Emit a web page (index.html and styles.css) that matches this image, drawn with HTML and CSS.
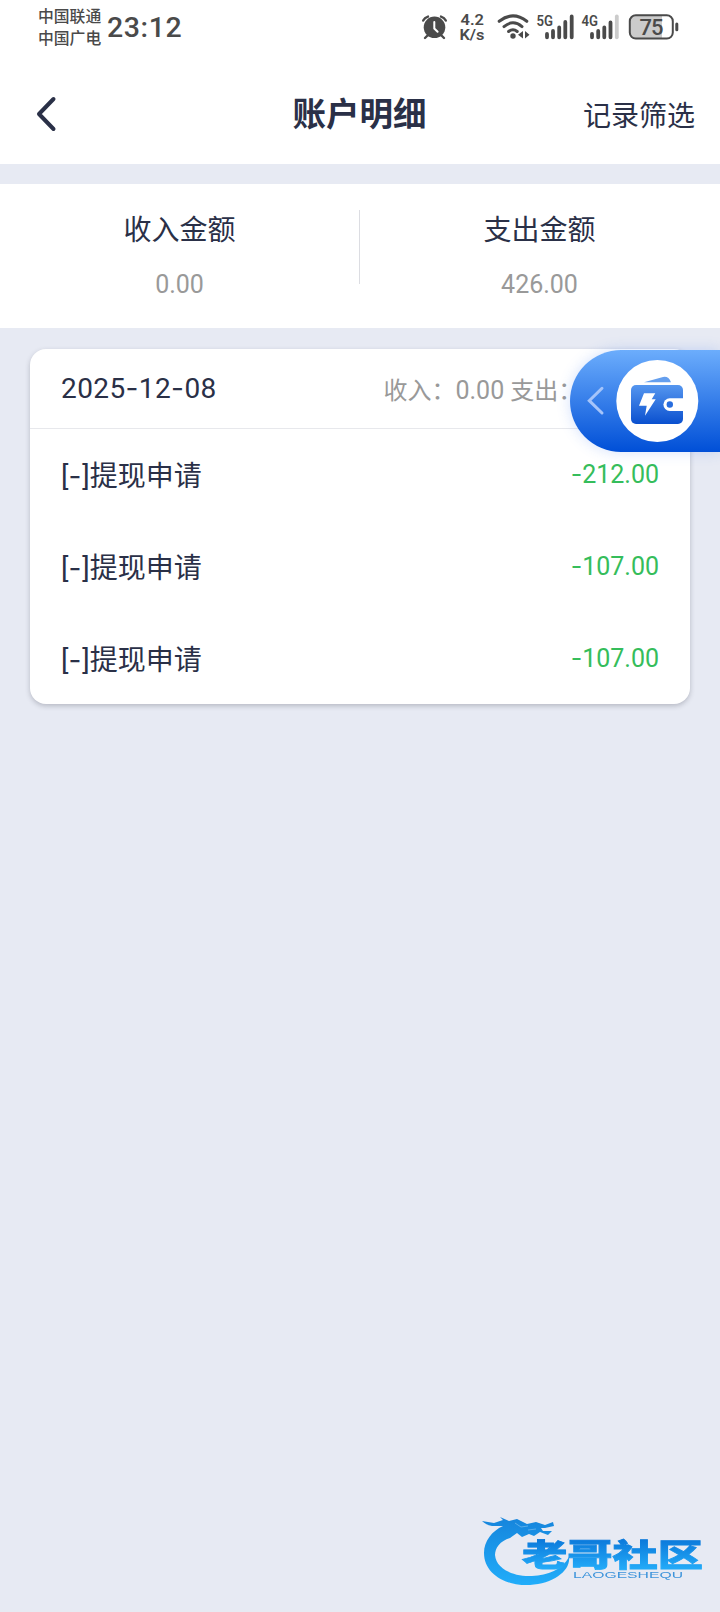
FILE: index.html
```html
<!DOCTYPE html>
<html lang="zh-CN">
<head>
<meta charset="utf-8">
<title>账户明细</title>
<link rel="stylesheet" href="styles.css">
</head>
<body>
<header class="status-bar">
  <div class="carriers"><span>中国联通</span><span>中国广电</span></div>
  <div class="clock">23:12</div>
  <svg class="status-icons" width="270" height="56" viewBox="415 0 270 56">
    <g fill="#4a4a4a" stroke="#4a4a4a" stroke-linecap="round">
      <circle cx="434.5" cy="27.3" r="10.8" stroke="none"/>
      <path d="M423.2 20.600Q424.600 17.600 428 16.600M445.800 20.600Q444.400 17.600 441 16.600M427.500 35.500L425 38M441.500 35.500L444 38" fill="none" stroke-width="2.4"/>
      <path d="M434.3 22V28.500L437.600 31.800" fill="none" stroke="#fff" stroke-width="2"/>
      <path d="M499.200 21.300Q513 10.500 526.800 21.300M504 26.600Q513 19 522 26.600M508.600 31.500Q513 28 517.200 31.500" fill="none" stroke-width="3"/>
      <circle cx="513" cy="36" r="2.7" stroke="none"/>
      <path d="M523 31V38.500L518 34.800ZM525 31V38.500L529.500 34.800Z" stroke="none"/>
    </g>
    <g class="status-text">
      <text x="460.5" y="25" font-size="14" textLength="23.5" lengthAdjust="spacingAndGlyphs">4.2</text>
      <text x="459.5" y="39.500" font-size="15.500" textLength="25" lengthAdjust="spacingAndGlyphs">K/s</text>
      <text x="536.500" y="25.500" font-size="15.500" textLength="16.500" lengthAdjust="spacingAndGlyphs">5G</text>
      <text x="581.500" y="26" font-size="15.500" textLength="16.500" lengthAdjust="spacingAndGlyphs">4G</text>
    </g>
    <g fill="none" stroke="#4a4a4a" stroke-width="3.8" stroke-linecap="round">
      <path d="M547 34V37.300M553 31V37.300M559.200 27.500V37.300M565.300 22V37.300M571.700 16.500V37.300"/>
      <path d="M592 34V37.300M598.200 31V37.300M604.300 27.500V37.300M610.500 22.500V37.300"/>
      <path d="M616.800 16.500V37.300" stroke="#cbcbcb"/>
    </g>
    <path d="M635 15.500H662V38.500H635Q630 38.500 630 33V21Q630 15.500 635 15.500Z" fill="#cbcbcb"/>
    <rect x="629.800" y="15.300" width="43" height="23.300" rx="6" fill="none" stroke="#4a4a4a" stroke-width="2"/>
    <rect x="675.300" y="22.500" width="3" height="8.800" rx="1.500" fill="#4a4a4a"/>
    <text class="status-text battery" x="639.500" y="34.500" font-size="22" textLength="24">75</text>
  </svg>
</header>

<nav class="nav">
  <svg class="back" width="24" height="36" viewBox="0 0 24 36"><path d="M19.500 3L5 18L19.500 33" fill="none" stroke="#2a3047" stroke-width="4" stroke-linecap="round" stroke-linejoin="round"/></svg>
  <h1 class="title">账户明细</h1>
  <span class="filter">记录筛选</span>
</nav>

<section class="summary">
  <div class="total"><span class="total-label">收入金额</span><span class="total-value">0.00</span></div>
  <div class="rule"></div>
  <div class="total"><span class="total-label">支出金额</span><span class="total-value">426.00</span></div>
</section>

<main class="card">
  <div class="day">
    <span class="date">2025<span class="dash">-</span>12<span class="dash">-</span>08</span>
    <span class="day-totals">收入：<span class="num">0.00</span> 支出：<span class="num">426.00</span></span>
  </div>
  <div class="row"><span>[<span class="dash wide">-</span>]提现申请</span><span class="amount"><span class="dash">-</span>212.00</span></div>
  <div class="row"><span>[<span class="dash wide">-</span>]提现申请</span><span class="amount"><span class="dash">-</span>107.00</span></div>
  <div class="row"><span>[<span class="dash wide">-</span>]提现申请</span><span class="amount"><span class="dash">-</span>107.00</span></div>
</main>

<div class="wallet-tab">
  <svg width="150" height="102" viewBox="0 0 150 102">
    <defs>
      <linearGradient id="wallet" x1="0" y1="35" x2="0" y2="74" gradientUnits="userSpaceOnUse"><stop offset="0" stop-color="#5596ef"/><stop offset="1" stop-color="#0a50cf"/></linearGradient>
    </defs>
    <path d="M32 38.300L19.300 50.700L32 63" fill="none" stroke="#a5c4fa" stroke-width="3" stroke-linecap="round"/>
    <circle cx="87.300" cy="51" r="41" fill="#fff"/>
    <path d="M74 32.200L93 27Q98.500 25.800 101 32.200Z" fill="#659fee"/>
    <rect x="61" y="35" width="52" height="39" rx="5" fill="url(#wallet)"/>
    <path d="M74 43.300H85.300L81.700 49.300H85.700L75 65.700L76.700 55.700H69Z" fill="#fff"/>
    <path d="M114 48.300H99.700A6.300 6.300 0 0 0 99.700 60.900H114Z" fill="#fff"/>
    <circle cx="99.800" cy="54.500" r="3.200" fill="#286dde"/>
  </svg>
</div>

<div class="logo">
  <svg width="250" height="112" viewBox="0 0 250 112">
    <defs>
      <linearGradient id="ring" x1="0" y1="18" x2="0" y2="85" gradientUnits="userSpaceOnUse"><stop offset="0" stop-color="#1685dc"/><stop offset="1" stop-color="#21adfa"/></linearGradient>
      <linearGradient id="word" x1="0" y1="39" x2="0" y2="68" gradientUnits="userSpaceOnUse"><stop offset="0" stop-color="#0b78da"/><stop offset="1" stop-color="#22a9f7"/></linearGradient>
    </defs>
    <path d="M12 21L24 23L33 20L30 17L39 21L47 19L57 24L66 22L75 25L83 22L84 26L75 28L71 28L73 31L82 31L78 35L70 32L64 36L59 34L52 37L47 33L40 38C30 41 25 48 25 55C26 69 44 77 62 76C78 75 92 70 99 57C101 70 84 84 60 85C34 86 14 73 14 53C14 41 22 31 33 26L22 26Q16 25 12 21Z" fill="url(#ring)"/>
    <path d="M45 23L51 27L58 26M58 30L66 29" fill="none" stroke="#58adea" stroke-width="1"/>
    <text class="logo-word" x="52" y="65.500" textLength="181" lengthAdjust="spacingAndGlyphs" fill="url(#word)" stroke="url(#word)">老哥社区</text>
    <text class="logo-latin" x="103" y="78.300" textLength="110" lengthAdjust="spacingAndGlyphs">LAOGESHEQU</text>
  </svg>
</div>
</body>
</html>
```

FILE: styles.css
```css
* { box-sizing: border-box; }

body {
  margin: 0;
  min-height: 1612px;
  background: #e7eaf3;
  color: #2a3047;
  font-family: Roboto, "Noto Sans CJK SC", sans-serif;
  font-size: 28px;
}

.status-bar {
  display: flex;
  height: 56px;
  padding-left: 38px;
  background: #fff;
  color: #4a4a4a;
}

.carriers {
  display: flex;
  flex-direction: column;
  width: 69px;
  padding-top: 6px;
  font-size: 15.8px;
  line-height: 22px;
  font-weight: 500;
  white-space: nowrap;
}

.clock {
  width: 308px;
  font-size: 28.5px;
  font-weight: 500;
  line-height: 56px;
  letter-spacing: 0.6px;
}

.status-text {
  font-family: Roboto, sans-serif;
  font-weight: 600;
  fill: #4a4a4a;
}

.battery { font-weight: 500; }

.nav {
  display: grid;
  grid-template-columns: 1fr auto 1fr;
  align-items: center;
  height: 108px;
  padding: 8px 25px 0 34px;
  background: #fff;
}

.title {
  margin: 2px 0 0 -10px;
  font-size: 33.5px;
  font-weight: 700;
  line-height: 48px;
}

.filter { justify-self: end; }

.summary {
  display: flex;
  height: 144px;
  margin-top: 20px;
  padding: 26px 1px 0 0;
  background: #fff;
}

.rule {
  width: 1px;
  height: 74px;
  background: #dcdde2;
}

.total {
  display: flex;
  flex: 1;
  flex-direction: column;
  align-items: center;
}

.total-label {
  padding-top: 1px;
  line-height: 40px;
}

.total-value {
  margin-top: 14px;
  color: #999;
  font-size: 25px;
  line-height: 40px;
}

.card {
  margin: 21px 30px 0;
  height: 355px;
  border-radius: 16px;
  background: #fff;
  box-shadow: 0 2px 5px rgba(40, 45, 60, 0.25);
}

.day,
.row {
  display: flex;
  align-items: center;
  justify-content: space-between;
  padding: 0 31px;
  white-space: nowrap;
}

.day {
  height: 80px;
  padding-bottom: 1px;
  border-bottom: 1px solid #e7e8ec;
}

.row {
  height: 92px;
  padding-bottom: 3px;
}

.date { letter-spacing: 0.4px; }

.dash { font-family: Inter, sans-serif; }

.wide { letter-spacing: 1px; }

.day-totals {
  color: #999;
  font-size: 24px;
}

.num { font-size: 25px; }

.amount {
  color: #35bd5b;
  font-size: 25px;
}

.wallet-tab {
  position: absolute;
  top: 350px;
  right: 0;
  width: 150px;
  height: 102px;
  border-radius: 51px 0 0 51px;
  background: linear-gradient(#6cadfc, #004fd7);
  box-shadow: 0 0 14px rgba(60, 120, 240, 0.22);
}

.logo {
  position: absolute;
  top: 1500px;
  left: 470px;
  width: 250px;
  height: 112px;
  filter: blur(0.6px);
}

.logo-word {
  font-family: "Noto Sans CJK SC", sans-serif;
  font-size: 31px;
  font-weight: 900;
  stroke-width: 0.8px;
}

.logo-latin {
  font-family: "Liberation Sans", sans-serif;
  font-size: 9.5px;
  fill: #3d94db;
}
```
